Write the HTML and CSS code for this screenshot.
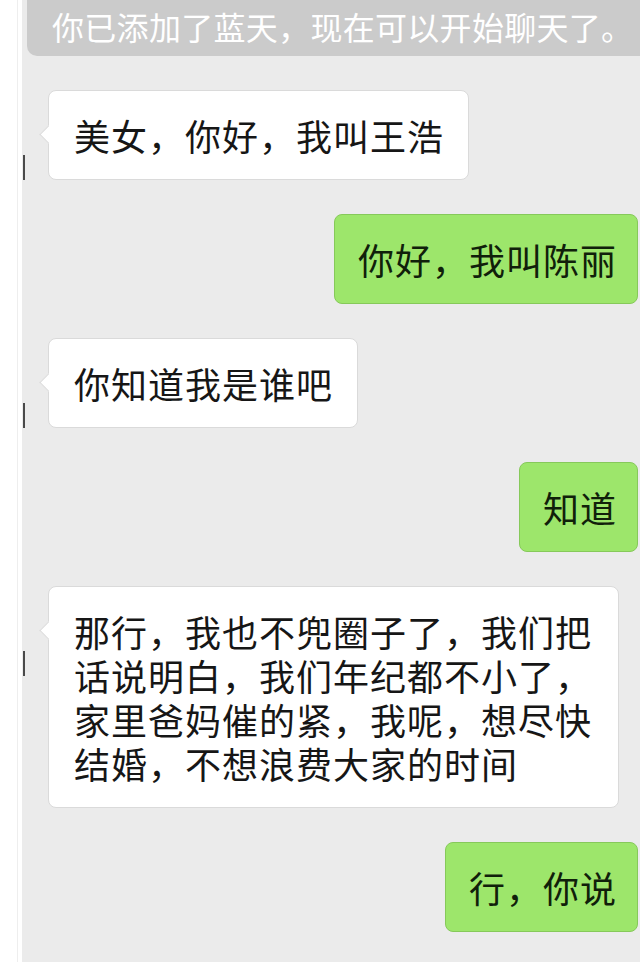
FILE: index.html
```html
<!DOCTYPE html>
<html lang="zh-CN">
  <head>
    <meta charset="UTF-8" />
    <meta name="viewport" content="width=device-width, initial-scale=1.0" />
    <title>聊天</title>
    <link rel="stylesheet" href="styles.css">
  </head>
  <body>
    <div class="screen">
      <div class="edge"></div>
      <div class="chat">
        <div class="notice">你已添加了蓝天，现在可以开始聊天了。</div>

        <div class="row row-left">
          <span class="avatar"></span>
          <div class="bubble bubble-in">美女，你好，我叫王浩</div>
        </div>

        <div class="row row-right">
          <div class="bubble bubble-out">你好，我叫陈丽</div>
        </div>

        <div class="row row-left">
          <span class="avatar"></span>
          <div class="bubble bubble-in">你知道我是谁吧</div>
        </div>

        <div class="row row-right">
          <div class="bubble bubble-out">知道</div>
        </div>

        <div class="row row-left">
          <span class="avatar"></span>
          <div class="bubble bubble-in">那行，我也不兜圈子了，我们把话说明白，我们年纪都不小了，家里爸妈催的紧，我呢，想尽快结婚，不想浪费大家的时间</div>
        </div>

        <div class="row row-right">
          <div class="bubble bubble-out">行，你说</div>
        </div>
      </div>
    </div>
  </body>
</html>
```

FILE: styles.css
```css
:root {
  --chat-bg: #ebebeb;
  --notice-bg: #cbcbcb;
  --green: #9de66b;
  --green-border: #86c95a;
  --white-border: #dadada;
  --text: #161616;
}

* {
  margin: 0;
  padding: 0;
  box-sizing: border-box;
}

body {
  background: #ffffff;
  font-family: "Noto Sans CJK SC", "Noto Sans", sans-serif;
  color: var(--text);
  overflow: hidden;
}

.screen {
  display: flex;
  height: 962px;
  width: 640px;
}

.edge {
  width: 18px;
  margin-right: 4px;
  border-right: 1px solid #eeeeee;
  flex-shrink: 0;
}

.chat {
  flex: 1;
  min-width: 0;
  background: var(--chat-bg);
  display: flex;
  flex-direction: column;
  gap: 34px;
}

.notice {
  margin-left: 5px;
  height: 56px;
  padding-left: 25px;
  background: var(--notice-bg);
  border-radius: 0 0 0 10px;
  color: #ffffff;
  font-size: 32px;
  line-height: 52px;
  letter-spacing: 0.3px;
  white-space: nowrap;
}

.row {
  display: flex;
  align-items: flex-start;
}

.row-left {
  padding-left: 1px;
  gap: 23px;
}

.row-right {
  justify-content: flex-end;
  padding-right: 2px;
}

.avatar {
  width: 2px;
  height: 25px;
  margin-top: 65px;
  background: #4a4a4a;
  flex-shrink: 0;
}

.bubble {
  position: relative;
  font-size: 36px;
  line-height: 44px;
  letter-spacing: 1px;
  padding: 22px 24px 22px 25px;
  border-radius: 8px;
  max-width: 571px;
}

.bubble-in {
  background: #ffffff;
  border: 1px solid var(--white-border);
}

.bubble-in::before {
  content: "";
  position: absolute;
  left: -7px;
  top: 37px;
  width: 12px;
  height: 12px;
  background: #ffffff;
  border-left: 1px solid var(--white-border);
  border-bottom: 1px solid var(--white-border);
  transform: rotate(45deg);
}

.bubble-out {
  background: var(--green);
  border: 1px solid var(--green-border);
  padding: 22px 20px 22px 23px;
  color: #10200a;
}
```
